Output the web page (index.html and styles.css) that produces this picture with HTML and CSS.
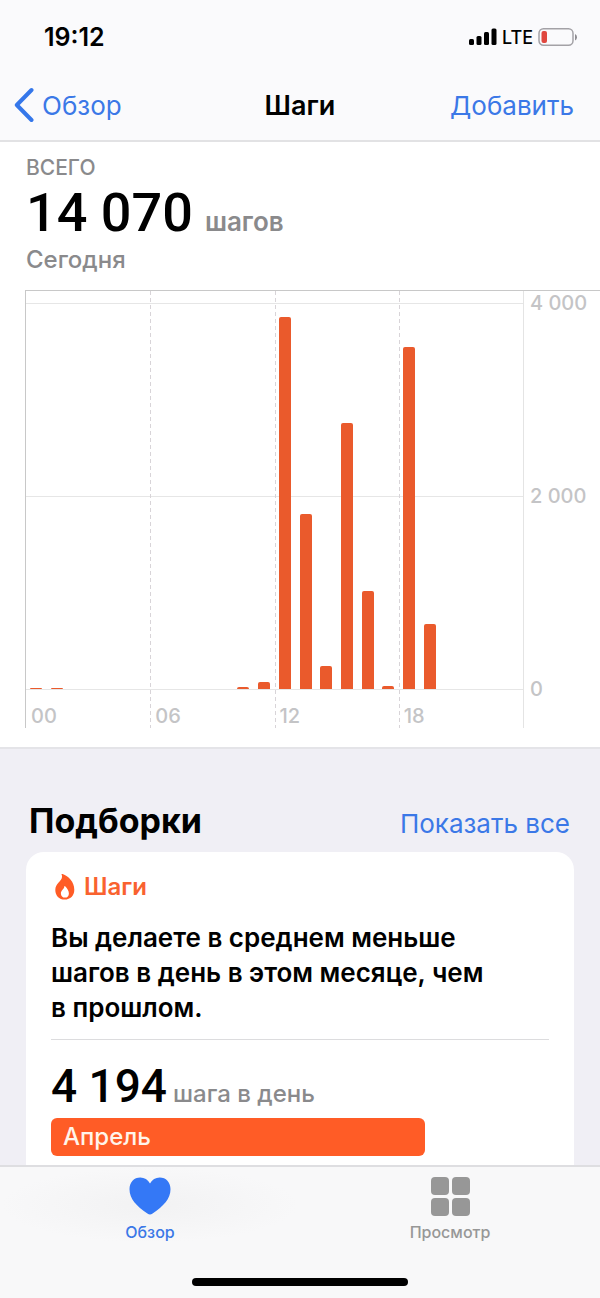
FILE: index.html
```html
<!DOCTYPE html>
<html lang="ru">
<head>
<meta charset="utf-8">
<meta name="viewport" content="width=device-width, initial-scale=1">
<title>Шаги</title>
<link rel="stylesheet" href="styles.css">
</head>
<body>
<div class="app">
  <header class="header">
    <div class="status">
      <time class="status-time">19:12</time>
      <div class="status-icons">
        <svg class="signal" viewBox="0 0 28 18" aria-hidden="true">
          <rect x="0" y="11" width="5" height="6" rx="1.5"/>
          <rect x="7.5" y="8" width="5" height="9" rx="1.5"/>
          <rect x="15" y="4" width="5" height="13" rx="1.5"/>
          <rect x="22.5" y="0.500" width="5" height="16.500" rx="1.5"/>
        </svg>
        <span class="network">LTE</span>
        <svg class="battery" viewBox="0 0 40 20" aria-hidden="true">
          <rect x="1" y="1.700" width="34" height="16.600" rx="4.500" fill="none" stroke="#a3a1a6" stroke-width="1.500"/>
          <rect x="3.500" y="4" width="5.500" height="12" rx="2" fill="#e0473f"/>
          <path d="M37 7v6.500q2-1 2-3.250T37 7z" fill="#8e8c91"/>
        </svg>
      </div>
    </div>
    <nav class="navbar">
      <a class="back" href="#">
        <svg class="chevron" viewBox="0 0 20 36" aria-hidden="true"><path d="M17.500 3 2.800 18l14.700 15"/></svg>
        Обзор
      </a>
      <h1 class="title">Шаги</h1>
      <button class="add" type="button">Добавить</button>
    </nav>
  </header>

  <main class="content">
    <section class="summary">
      <div class="total">
        <p class="total-label">ВСЕГО</p>
        <p class="total-value"><span class="total-number">14 070</span> <span class="total-unit">шагов</span></p>
        <p class="total-date">Сегодня</p>
      </div>
      <div class="chart">
        <div class="plot">
          <span class="line line-top"></span>
          <span class="line line-middle"></span>
          <span class="line line-zero"></span>
          <div class="hours">
            <span class="hour">00</span>
            <span class="hour">06</span>
            <span class="hour">12</span>
            <span class="hour">18</span>
          </div>
          <div class="bars">
            <i class="bar" style="height:0.2%"></i>
            <i class="bar" style="height:0.3%"></i>
            <i class="bar" style="height:0%"></i>
            <i class="bar" style="height:0%"></i>
            <i class="bar" style="height:0%"></i>
            <i class="bar" style="height:0%"></i>
            <i class="bar" style="height:0%"></i>
            <i class="bar" style="height:0%"></i>
            <i class="bar" style="height:0%"></i>
            <i class="bar" style="height:0%"></i>
            <i class="bar" style="height:0.6%"></i>
            <i class="bar" style="height:1.8%"></i>
            <i class="bar" style="height:96.4%"></i>
            <i class="bar" style="height:45.4%"></i>
            <i class="bar" style="height:6%"></i>
            <i class="bar" style="height:68.9%"></i>
            <i class="bar" style="height:25.3%"></i>
            <i class="bar" style="height:0.7%"></i>
            <i class="bar" style="height:88.5%"></i>
            <i class="bar" style="height:16.8%"></i>
            <i class="bar" style="height:0%"></i>
            <i class="bar" style="height:0%"></i>
            <i class="bar" style="height:0%"></i>
            <i class="bar" style="height:0%"></i>
          </div>
        </div>
        <div class="scale">
          <span class="mark">4 000</span>
          <span class="mark">2 000</span>
          <span class="mark">0</span>
        </div>
      </div>
    </section>

    <section class="highlights">
      <div class="highlights-head">
        <h2 class="highlights-title">Подборки</h2>
        <a class="show-all" href="#">Показать все</a>
      </div>
      <article class="card">
        <h3 class="card-title">
          <svg class="flame" viewBox="0 0 20 26" aria-hidden="true">
            <path fill="#ff5c26" d="M6.600.400C6.200-.1 6.900-.1 7.600.1 13.500 2.300 19.300 8 19.300 15.700c0 6-4 9.800-9.600 9.800S.300 21.500.300 15.900c0-3 1.300-5.400 3.100-7.200C5.900 6.100 8 3.700 6.600.400z"/>
            <path fill="#fff" d="M9.400 12.300c.1-.6.600-.4 1 .1 1.800 1.900 3.500 4.300 3.500 7 0 2.500-1.500 4.200-3.900 4.200s-4.100-1.600-4.100-4.200c0-3 3.300-4.200 3.500-7.100z"/>
          </svg>
          Шаги
        </h3>
        <p class="card-text">Вы делаете в среднем меньше шагов в день в этом месяце, чем в&nbsp;прошлом.</p>
        <p class="average"><span class="average-number">4 194</span> <span class="average-unit">шага в день</span></p>
        <div class="month" style="width:75%">Апрель</div>
      </article>
    </section>
  </main>

  <footer class="tabbar">
    <nav class="tabs">
      <a class="tab tab-active" href="#">
        <svg class="tab-icon" viewBox="0 0 42 40" aria-hidden="true"><path d="M21 38.500c-.8 0-1.700-.5-2.600-1.100C7.500 30 .500 22.700.500 13.200.500 6.200 5 1.500 11.300 1.500c4.100 0 7.700 2 9.700 6 2-4 5.600-6 9.700-6 6.300 0 10.800 4.700 10.800 11.700 0 9.500-7 16.800-17.900 24.200-.9.600-1.800 1.100-2.600 1.100z"/></svg>
        Обзор
      </a>
      <a class="tab" href="#">
        <svg class="tab-icon" viewBox="0 0 42 40" aria-hidden="true">
          <rect x="2" y="1" width="18" height="18" rx="4"/>
          <rect x="23" y="1" width="18" height="18" rx="4"/>
          <rect x="2" y="22" width="18" height="18" rx="4"/>
          <rect x="23" y="22" width="18" height="18" rx="4"/>
        </svg>
        Просмотр
      </a>
    </nav>
    <div class="home-indicator"></div>
  </footer>
</div>
</body>
</html>
```

FILE: styles.css
```css
* { box-sizing: border-box; }

body {
  margin: 0;
  font-family: Inter, "Liberation Sans", sans-serif;
  color: #000;
  background: #f0eff5;
}

h1, h2, h3, p { margin: 0; }
a { color: inherit; text-decoration: none; }

.app {
  display: flex;
  flex-direction: column;
  height: 100vh;
}

.header {
  background: #fafafc;
  border-bottom: 2px solid #e2e2e4;
}

.status {
  display: flex;
  justify-content: space-between;
  align-items: center;
  height: 74px;
  padding: 0 22px 0 44px;
}

.status-time { font-size: 25px; font-weight: 600; }
.status-icons { display: flex; align-items: center; gap: 5px; }
.signal { width: 28px; height: 18px; }
.network { font-size: 18px; font-weight: 500; }
.battery { width: 40px; height: 20px; }

.navbar {
  display: grid;
  grid-template-columns: 1fr auto 1fr;
  align-items: center;
  height: 66px;
  padding: 0 26px 4px;
}

.back {
  display: flex;
  align-items: center;
  gap: 8px;
  margin-left: -12px;
  font-size: 26px;
  color: #3b78e7;
}

.chevron {
  width: 20px;
  height: 36px;
  fill: none;
  stroke: #3577ea;
  stroke-width: 4;
  stroke-linecap: round;
  stroke-linejoin: round;
}

.title { font-size: 27px; font-weight: 600; }

.add {
  justify-self: end;
  padding: 0;
  border: 0;
  background: none;
  font: inherit;
  font-size: 26px;
  color: #3b78e7;
}

.content { flex: 1; min-height: 0; overflow: hidden; }

.summary {
  padding-bottom: 19px;
  background: #fff;
  border-bottom: 2px solid #e4e4e8;
}

.total {
  padding: 14px 26px 16px;
  color: #8a8a8c;
  font-weight: 500;
}

.total-label { font-size: 21px; line-height: 24px; }

.total-value {
  display: flex;
  align-items: baseline;
  gap: 12px;
}

.total-number {
  font-family: Roboto, sans-serif;
  font-size: 54px;
  line-height: 66px;
  color: #000;
}

.total-unit { font-size: 26px; line-height: 30px; font-weight: 600; }
.total-date { font-size: 24px; line-height: 28px; }

.chart {
  display: grid;
  grid-template-columns: 1fr 76px;
  margin-left: 25px;
  border-top: 1px solid #c8c8c8;
}

.plot {
  display: grid;
  grid-template-rows: 12px 193px 193px 39px;
  border-left: 1px solid #c8c8c8;
  border-right: 1px solid #e4e4e4;
}

.line { grid-column: 1; border-top: 1px solid #e6e6e6; }
.line-top { grid-row: 2; }
.line-middle { grid-row: 3; }
.line-zero { grid-row: 4; }

.hours {
  grid-area: 1 / 1 / 5 / 2;
  display: grid;
  grid-template-columns: repeat(4, 1fr);
  align-items: stretch;
}

.hour {
  display: flex;
  align-items: flex-end;
  padding-left: 5px;
  font-size: 20px;
  line-height: 24px;
  font-weight: 500;
  color: #c4c4c6;
}

.hour + .hour {
  background: repeating-linear-gradient(#d8d4d8 0 4px, transparent 4px 7px) left / 1px 100% no-repeat;
}

.bars {
  grid-area: 2 / 1 / 4 / 2;
  display: grid;
  grid-template-columns: repeat(24, 1fr);
  align-items: end;
  justify-items: center;
}

.bar {
  width: 12px;
  background: #ea5a2c;
  border-radius: 2px 2px 0 0;
}

.scale {
  display: grid;
  grid-template-rows: 193px 193px 24px;
  padding-left: 6px;
  font-size: 20px;
  line-height: 24px;
  font-weight: 500;
  color: #c4c4c6;
}

.highlights { padding: 51px 26px 0; }

.highlights-head {
  display: flex;
  justify-content: space-between;
  align-items: baseline;
  padding: 0 4px 10px 3px;
}

.highlights-title { font-size: 34px; line-height: 42px; font-weight: 700; }
.show-all { font-size: 26px; color: #3b78e7; }

.card {
  padding: 20px 25px 36px;
  background: #fff;
  border-radius: 18px 18px 0 0;
}

.card-title {
  display: flex;
  align-items: center;
  gap: 9px;
  padding-left: 4px;
  font-size: 24px;
  line-height: 30px;
  font-weight: 600;
  color: #f9622f;
}

.flame { width: 20px; height: 26px; }

.card-text {
  padding: 18px 30px 14px 0;
  border-bottom: 1px solid #dcdcde;
  font-size: 26px;
  line-height: 35px;
  font-weight: 600;
}

.average {
  display: flex;
  align-items: baseline;
  gap: 6px;
  padding: 17px 0 3px;
  font-weight: 500;
}

.average-number {
  font-family: Roboto, sans-serif;
  font-size: 46px;
  line-height: 58px;
}

.average-unit { font-size: 24px; line-height: 30px; color: #8a8a8c; }

.month {
  padding: 0 12px;
  background: #ff5c26;
  border-radius: 6px;
  font-size: 24px;
  line-height: 38px;
  font-weight: 500;
  color: #fff4ea;
}

.tabbar {
  display: flex;
  flex-direction: column;
  align-items: center;
  justify-content: space-between;
  padding-bottom: 12px;
  height: 133px;
  background: #f8f8f9;
  border-top: 2px solid #dedee1;
}

.tabs { display: flex; width: 100%; }

.tab {
  flex: 1;
  display: flex;
  flex-direction: column;
  align-items: center;
  gap: 5px;
  padding-top: 9px;
  font-size: 16px;
  line-height: 22px;
  font-weight: 500;
  color: #979797;
}

.tab-active {
  color: #3b78e7;
  background: radial-gradient(ellipse at center, #f2f2f3, #f8f8f9 70%);
}

.tab-icon { width: 42px; height: 40px; fill: #979797; }
.tab-active .tab-icon { fill: #3478f6; }

.home-indicator {
  width: 36%;
  height: 8px;
  background: #000;
  border-radius: 4px;
}
```
